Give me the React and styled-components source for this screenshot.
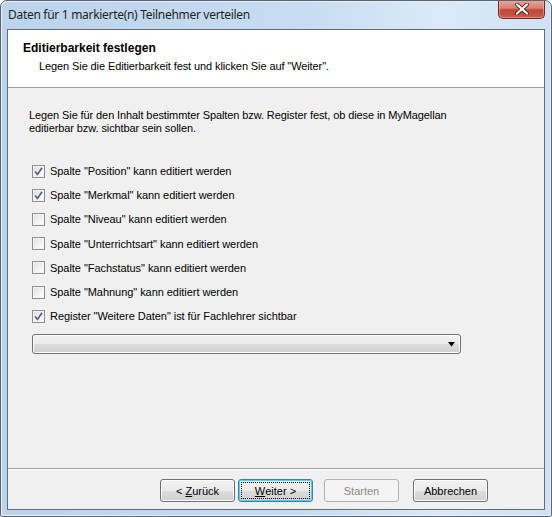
import React from "react";
import styled, { createGlobalStyle } from "styled-components";

const Global = createGlobalStyle`
  html, body { margin: 0; padding: 0; background: #fff; }
  body { width: 552px; height: 517px; overflow: hidden; }
  * { box-sizing: border-box; }
`;

const Window = styled.div`
  width: 552px;
  height: 517px;
  display: flex;
  flex-direction: column;
  border: 1px solid #5a6470;
  border-radius: 7px 7px 2px 2px;
  background: linear-gradient(90deg, #bcd3ec 0%, #c7dcf1 55%, #dbe9f8 80%, #cfe1f4 100%);
  box-shadow: inset 1px 1px 0 #e6f0fb, inset -1px -1px 0 #e6f0fb;
  font-family: "Liberation Sans", Arial, sans-serif;
  overflow: hidden;
`;

const TitleBar = styled.div`
  height: 28px;
  display: flex;
  align-items: flex-start;
  padding-left: 7px;
  flex-shrink: 0;
`;

const Title = styled.div`
  font-family: "Noto Sans", "Liberation Sans", sans-serif;
  font-size: 12px;
  color: #1e1e1e;
  line-height: 14px;
  margin-top: 7px;
  letter-spacing: -0.3px;
`;

const CloseButton = styled.div`
  margin-left: auto;
  margin-right: 6px;
  width: 47px;
  height: 19px;
  margin-top: -1px;
  border: 1px solid #6d2a22;
  border-top: none;
  border-radius: 0 0 5px 5px;
  background: linear-gradient(180deg, #e9a99a 0%, #d9806d 45%, #c0463a 55%, #cc5a44 100%);
  box-shadow: inset 0 0 0 1px rgba(255, 200, 190, 0.45);
  display: flex;
  align-items: center;
  justify-content: center;
`;

const Client = styled.div`
  flex: 1;
  margin: 0 6px 6px 6px;
  border: 1px solid #636a74;
  background: #f0f0f0;
  display: flex;
  flex-direction: column;
`;

const Header = styled.div`
  height: 58px;
  background: #fff;
  border-bottom: 1px solid #a0a0a0;
  padding: 11px 0 0 15px;
  flex-shrink: 0;
`;

const HeaderTitle = styled.div`
  font-weight: bold;
  font-size: 12px;
  line-height: 15px;
  color: #000;
`;

const HeaderSub = styled.div`
  font-size: 11px;
  line-height: 14px;
  color: #000;
  margin-top: 3px;
  padding-left: 16px;
  letter-spacing: -0.1px;
`;

const Content = styled.div`
  flex: 1;
  padding: 21px 0 0 21px;
  display: flex;
  flex-direction: column;
`;

const Paragraph = styled.div`
  font-size: 11px;
  line-height: 13px;
  color: #000;
  width: 440px;
  letter-spacing: -0.1px;
`;

const CheckList = styled.div`
  margin-top: 24px;
  display: flex;
  flex-direction: column;
`;

const Row = styled.label`
  height: 24.2px;
  display: flex;
  align-items: center;
  padding-left: 3px;
  font-size: 11px;
  color: #000;
  letter-spacing: -0.05px;
`;

const Box = styled.span`
  width: 13px;
  height: 13px;
  border: 1px solid #8e8f8f;
  background: linear-gradient(135deg, #dcdcdc 0%, #f4f4f4 60%, #ffffff 100%);
  box-shadow: inset 0 0 0 1px #f4f4f4;
  display: flex;
  align-items: center;
  justify-content: center;
  margin-right: 5px;
  flex-shrink: 0;
`;

const Select = styled.div`
  margin-top: 6px;
  margin-left: 3px;
  width: 429px;
  height: 20px;
  border: 1px solid #707070;
  border-radius: 3px;
  background: linear-gradient(180deg, #f2f2f2 0%, #ebebeb 50%, #dddddd 51%, #cfcfcf 100%);
  box-shadow: inset 0 0 0 1px #fcfcfc;
  display: flex;
  align-items: center;
  justify-content: flex-end;
  padding-right: 4px;
`;

const Footer = styled.div`
  height: 41px;
  border-top: 1px solid #a0a0a0;
  box-shadow: inset 0 1px 0 #ffffff;
  display: flex;
  align-items: flex-start;
  padding: 10px 0 0 152px;
  flex-shrink: 0;
`;

const Button = styled.button`
  width: 75px;
  height: 23px;
  margin-right: ${(p) => p.$gap || 3}px;
  padding: 0;
  font-family: "Liberation Sans", Arial, sans-serif;
  font-size: 11px;
  color: ${(p) => (p.$disabled ? "#8a8a8a" : "#000")};
  border-radius: 3px;
  border: 1px solid ${(p) => (p.$focused ? "#3c7fb1" : p.$disabled ? "#adb2b5" : "#707070")};
  background: ${(p) =>
    p.$disabled
      ? "#f4f4f4"
      : "linear-gradient(180deg, #f2f2f2 0%, #ebebeb 50%, #dddddd 51%, #cfcfcf 100%)"};
  box-shadow: ${(p) =>
    p.$focused ? "inset 0 0 0 1px #48d4fc" : p.$disabled ? "none" : "inset 0 0 0 1px #fcfcfc"};
  display: flex;
  align-items: center;
  justify-content: center;
  position: relative;
  &::after {
    content: "";
    display: ${(p) => (p.$focused ? "block" : "none")};
    position: absolute;
    inset: 2px;
    border: 1px dotted #000;
  }
`;

const U = styled.span`
  text-decoration: underline;
`;

const CheckMark = () => (
  <svg width="9" height="9" viewBox="0 0 9 9">
    <path d="M1 4.5 L3.5 7.5 L8 0.8" fill="none" stroke="#4a5f97" strokeWidth="1.6" />
  </svg>
);

const items = [
  { label: 'Spalte "Position" kann editiert werden', checked: true },
  { label: 'Spalte "Merkmal" kann editiert werden', checked: true },
  { label: 'Spalte "Niveau" kann editiert werden', checked: false },
  { label: 'Spalte "Unterrichtsart" kann editiert werden', checked: false },
  { label: 'Spalte "Fachstatus" kann editiert werden', checked: false },
  { label: 'Spalte "Mahnung" kann editiert werden', checked: false },
  { label: 'Register "Weitere Daten" ist für Fachlehrer sichtbar', checked: true },
];

export default function App() {
  return (
    <>
      <Global />
      <Window>
        <TitleBar>
          <Title>Daten für 1 markierte(n) Teilnehmer verteilen</Title>
          <CloseButton>
            <svg width="14" height="12" viewBox="0 0 14 12">
              <path d="M2 1.5 L12 10.5 M12 1.5 L2 10.5" stroke="#5a2a24" strokeWidth="4" strokeLinecap="round" />
              <path d="M2 1.5 L12 10.5 M12 1.5 L2 10.5" stroke="#ffffff" strokeWidth="2.2" strokeLinecap="round" />
            </svg>
          </CloseButton>
        </TitleBar>
        <Client>
          <Header>
            <HeaderTitle>Editierbarkeit festlegen</HeaderTitle>
            <HeaderSub>Legen Sie die Editierbarkeit fest und klicken Sie auf "Weiter".</HeaderSub>
          </Header>
          <Content>
            <Paragraph>
              Legen Sie für den Inhalt bestimmter Spalten bzw. Register fest, ob diese in MyMagellan
              editierbar bzw. sichtbar sein sollen.
            </Paragraph>
            <CheckList>
              {items.map((it) => (
                <Row key={it.label}>
                  <Box>{it.checked && <CheckMark />}</Box>
                  {it.label}
                </Row>
              ))}
            </CheckList>
            <Select>
              <svg width="8" height="5" viewBox="0 0 8 5">
                <path d="M0 0 H7 L3.5 4.5 Z" fill="#000" />
              </svg>
            </Select>
          </Content>
          <Footer>
            <Button>
              &lt;&nbsp;<U>Z</U>urück
            </Button>
            <Button $focused $gap={11}>
              <U>W</U>eiter&nbsp;&gt;
            </Button>
            <Button $disabled $gap={14}>Starten</Button>
            <Button>Abbrechen</Button>
          </Footer>
        </Client>
      </Window>
    </>
  );
}
